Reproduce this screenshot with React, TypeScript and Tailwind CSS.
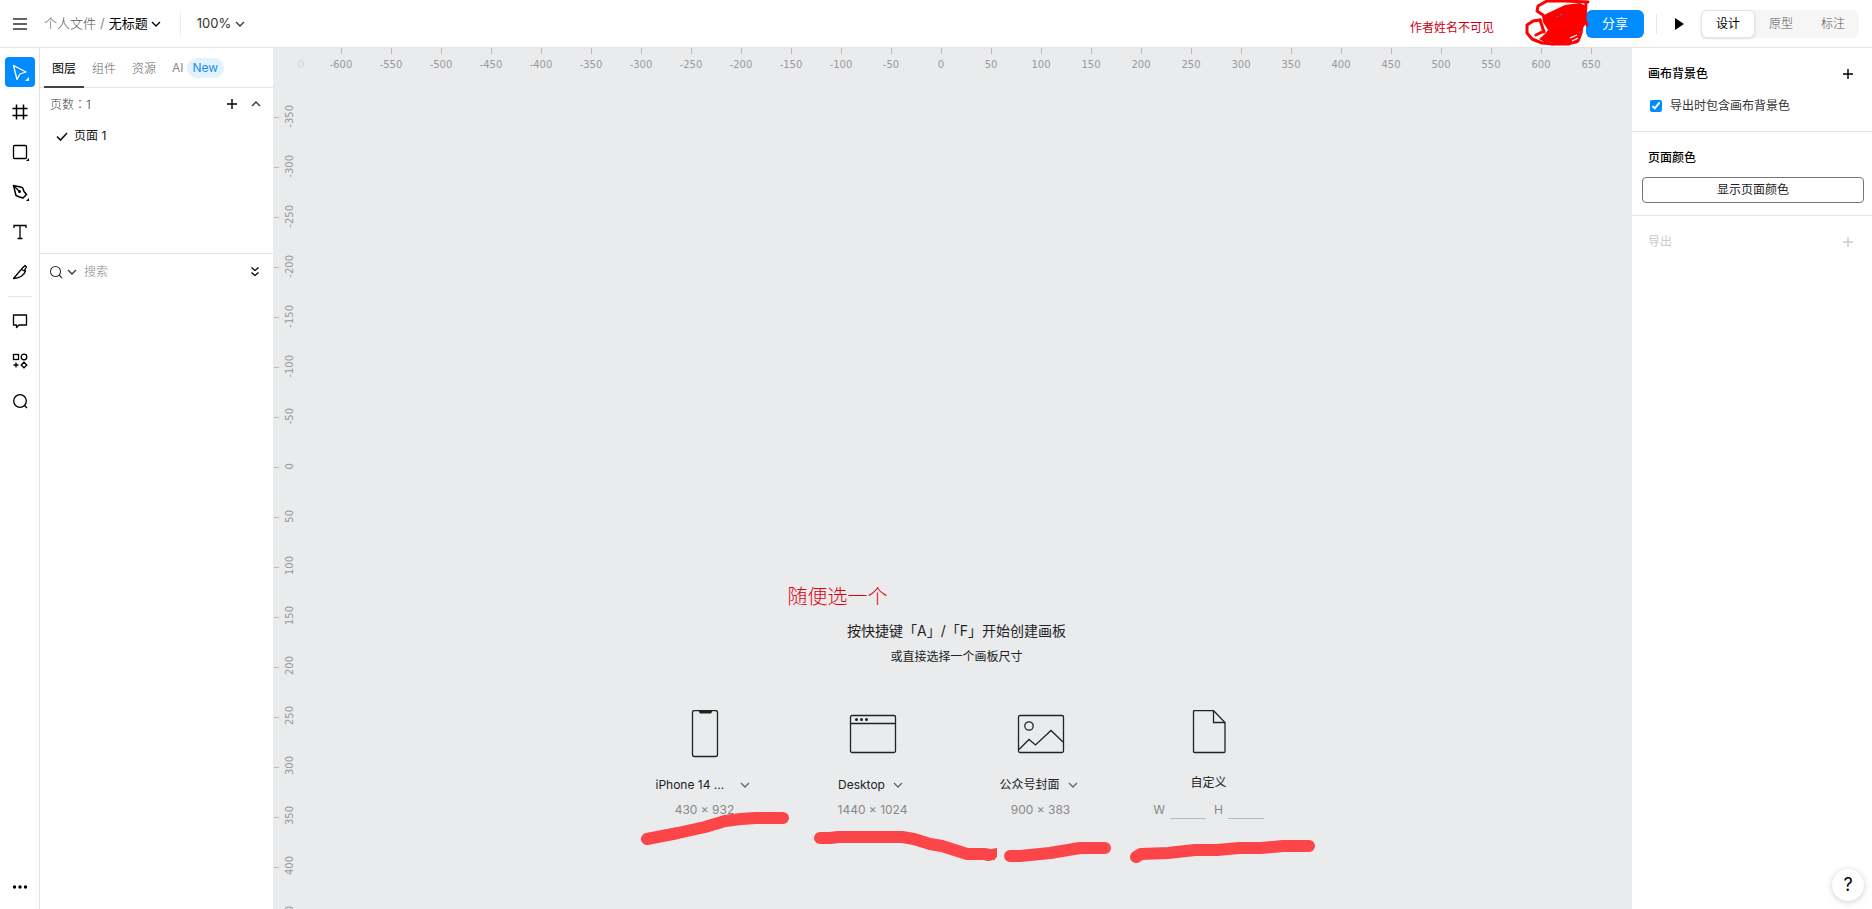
import type { ReactNode } from 'react';
import { useState } from 'react';
import clsx from 'clsx';

const rulerX = Array.from({ length: 26 }, (_, i) => -600 + i * 50);
const rulerY = Array.from({ length: 17 }, (_, i) => -350 + i * 50);

function Icon({ size = 20, className, children }: { size?: number; className?: string; children: ReactNode }) {
  return (
    <svg
      width={size}
      height={size}
      viewBox={`0 0 ${size} ${size}`}
      fill="none"
      stroke="currentColor"
      strokeWidth="1.3"
      className={clsx('shrink-0', className)}
      aria-hidden="true"
    >
      {children}
    </svg>
  );
}

function Chevron({ className, up }: { className?: string; up?: boolean }) {
  return (
    <Icon size={10} className={className}>
      <path d={up ? 'M1 7l4-4 4 4' : 'M1 3l4 4 4-4'} />
    </Icon>
  );
}

function Plus({ className }: { className?: string }) {
  return (
    <Icon size={10} className={className}>
      <path d="M5 0v10M0 5h10" strokeWidth="1.4" />
    </Icon>
  );
}

const tools = [
  {
    label: '选择',
    icon: (
      <>
        <path d="M3.5 3.5l12.5 6.5-6 2-3 5.5z" strokeLinejoin="round" />
        <path d="M19 15v4h-4z" fill="currentColor" stroke="none" />
      </>
    ),
  },
  { label: '画板', icon: <path d="M6.5 2.5v15M13.5 2.5v15M2.5 6.5h15M2.5 13.5h15" strokeWidth="1.5" /> },
  {
    label: '矩形',
    icon: (
      <>
        <rect x="3.5" y="3.5" width="13" height="13" rx="1" />
        <path d="M19 16v3h-3z" fill="currentColor" stroke="none" />
      </>
    ),
  },
  {
    label: '钢笔',
    icon: (
      <>
        <path d="M3.5 3.5l9 2 1.5 4 2.500 3-3.500 3.500-3.500-1-3.500-1.500z" strokeLinejoin="round" strokeWidth="1.5" />
        <path d="M3.5 3.5l5.500 5.500" />
        <circle cx="9.5" cy="9.5" r="1.5" fill="currentColor" stroke="none" />
        <path d="M19 16v3h-3z" fill="currentColor" stroke="none" />
      </>
    ),
  },
  { label: '文本', icon: <path d="M4 6V3.5h12V6M10 3.5v13M7.5 16.5h5" /> },
  {
    label: '切图',
    icon: (
      <path
        d="M3.5 16.5l9-10.5 2.5-2.5 1.5 1.5-2 3 1 1c-1 4-6 7.5-12 7.5zM11.5 7.5l3 1.5"
        strokeLinejoin="round"
      />
    ),
  },
];

const extras = [
  { label: '评论', icon: <path d="M3.5 4h13v10H9l-2.5 2.5V14h-3z" strokeLinejoin="round" /> },
  {
    label: '插件',
    icon: (
      <>
        <rect x="3.5" y="3.5" width="5" height="5" />
        <circle cx="14" cy="6" r="2.8" />
        <path d="M6 11.5v5M3.5 14h5M14 11.2l2.8 2.8-2.8 2.8-2.8-2.8z" />
      </>
    ),
  },
  {
    label: '查找',
    icon: (
      <>
        <circle cx="10" cy="10" r="6.3" />
        <path d="M14.5 14.5l2.5 2.5" />
      </>
    ),
  },
];

const presets = [
  {
    name: 'iPhone 14 ...',
    size: '430 × 932',
    icon: (
      <>
        <rect x="11.5" y="0.5" width="25" height="46" rx="2" />
        <path d="M18 1h13v1l-1 1.500H19l-1-1.500z" fill="currentColor" stroke="none" />
      </>
    ),
  },
  {
    name: 'Desktop',
    size: '1440 × 1024',
    icon: (
      <>
        <rect x="1.5" y="5.5" width="45" height="37" rx="1.5" />
        <path d="M1.5 13.5h45" />
        <circle cx="7.5" cy="9.5" r="1.5" fill="currentColor" stroke="none" />
        <circle cx="12.5" cy="9.5" r="1.5" fill="currentColor" stroke="none" />
        <circle cx="17.5" cy="9.5" r="1.5" fill="currentColor" stroke="none" />
      </>
    ),
  },
  {
    name: '公众号封面',
    size: '900 × 383',
    icon: (
      <>
        <rect x="1.5" y="5.5" width="45" height="37" rx="1.5" />
        <circle cx="12" cy="16" r="4.2" />
        <path d="M2 39.5l10-10 6.5 5.5L34 20.5 46 32" />
      </>
    ),
  },
];

function ToolButton({ label, active, children }: { label: string; active?: boolean; children: ReactNode }) {
  return (
    <button
      type="button"
      aria-label={label}
      className={clsx(
        'flex size-[30px] items-center justify-center rounded',
        active ? 'bg-[#008cff] text-white' : 'text-black',
      )}
    >
      <Icon>{children}</Icon>
    </button>
  );
}

// Red scrawl over the author name
function Scribble() {
  return (
    <svg width="64" height="48" viewBox="0 0 64 48" className="relative ml-7 overflow-visible" aria-hidden="true">
      <path d="M20 16l6-3 17-8 15-2 6 3-1 19-5 6-2 8-8 3-10 1-16-1-5-3 6-5 3-4-5-8z" fill="#fe0000" />
      <g fill="none" stroke="#fe0000" strokeWidth="3" strokeLinejoin="round" strokeLinecap="round">
        <path d="M66 2L43 1 25 1 16 6 15 11 21 15" />
        <path d="M64 3l-1 17 2 5" />
        <path d="M18 20L11 21 5 25 5 33 10 39 20 43 32 44 46 44 56 41 59 33 60 26" />
        <path d="M14 35l8-4M18 20l4 12M30 44l14-3 10 1" />
      </g>
      <path d="M26 9l12-5M48 38l7-3M50 41l6-3" stroke="#fff" strokeWidth="1.2" />
      <path d="M34 17l3-1M38 15l3-1" stroke="#7a4fc0" strokeWidth="1" />
    </svg>
  );
}

function Header() {
  return (
    <header className="flex h-12 shrink-0 items-center border-b border-[#e3e3e5] bg-white text-xs">
      <button type="button" aria-label="菜单" className="ml-[13px] flex h-6 w-[14px] items-center text-[#333]">
        <svg width="14" height="12" fill="none" stroke="currentColor" strokeWidth="1.5" aria-hidden="true">
          <path d="M0 1h14M0 6h14M0 11h14" />
        </svg>
      </button>
      <nav className="ml-[17px] flex items-center gap-1 pt-px text-[13px]">
        <a href="#files" className="font-light text-[#555]">
          个人文件
        </a>
        <span className="text-[#888]">/</span>
        <button type="button" className="flex items-center gap-[3px] text-black">
          无标题
          <Chevron />
        </button>
      </nav>
      <div className="ml-[19px] h-6 w-px bg-[#ececec]" />
      <button type="button" className="ml-4 flex items-center gap-1 pt-px text-[13px] text-[#333]">
        100%
        <Chevron />
      </button>

      <span className="ml-auto pt-2 text-[#cc0011]">作者姓名不可见</span>
      <Scribble />
      <button type="button" className="h-7 w-[58px] rounded-md bg-[#008cff] text-[13px] text-white">
        分享
      </button>
      <div className="ml-3 h-5 w-px bg-[#e6e6e6]" />
      <button type="button" aria-label="播放" className="ml-[18px]">
        <svg width="10" height="12" fill="#000" aria-hidden="true">
          <path d="M0 0l9 6-9 6z" />
        </svg>
      </button>
      <div className="ml-4 mr-[13px] flex h-7 rounded-md bg-[#f6f6f6] text-[#555]">
        <button type="button" className="w-[54px] rounded-md border border-[#e4e4e4] bg-white text-black shadow-sm">
          设计
        </button>
        <button type="button" className="w-[52px] font-light">
          原型
        </button>
        <button type="button" className="w-[52px] font-light">
          标注
        </button>
      </div>
    </header>
  );
}

function Toolbar() {
  return (
    <aside className="flex w-10 shrink-0 flex-col items-center gap-[10px] border-r border-[#e3e3e5] pb-[7px] pt-[9px]">
      {tools.map((t, i) => (
        <ToolButton key={t.label} label={t.label} active={i === 0}>
          {t.icon}
        </ToolButton>
      ))}
      <div className="-my-px h-px w-6 bg-[#e3e3e5]" />
      {extras.map((t) => (
        <ToolButton key={t.label} label={t.label}>
          {t.icon}
        </ToolButton>
      ))}
      <div className="mt-auto">
        <ToolButton label="更多">
          <g fill="currentColor" stroke="none">
            <circle cx="4.5" cy="10" r="1.7" />
            <circle cx="10" cy="10" r="1.7" />
            <circle cx="15.5" cy="10" r="1.7" />
          </g>
        </ToolButton>
      </div>
    </aside>
  );
}

function LayersPanel() {
  return (
    <aside className="w-[233px] shrink-0 text-xs">
      <div className="flex h-10 items-stretch border-b border-[#e3e3e5] pl-1 font-light text-[#666]">
        <button type="button" className="-mb-px w-10 border-b-2 border-[#444] pt-[3px] font-normal text-black">
          图层
        </button>
        <button type="button" className="w-10 pt-[2px]">
          组件
        </button>
        <button type="button" className="w-10 pt-[2px]">
          资源
        </button>
        <button type="button" className="flex items-center gap-[3px] pl-2 pt-px font-normal text-[#888]">
          AI
          <span className="rounded-full bg-[#e3f2ff] px-[6px] py-[2px] text-[#1a8cef]">New</span>
        </button>
      </div>
      <div className="flex h-8 items-center pl-[10px] pr-2">
        <span className="font-light text-[#444]">
          页数<span className="font-['Noto_Sans_CJK_TC',sans-serif]">：</span>1
        </span>
        <button type="button" aria-label="添加页面" className="ml-auto p-1">
          <Plus />
        </button>
        <button type="button" aria-label="收起" className="ml-[6px] p-1 text-[#333]">
          <Chevron up />
        </button>
      </div>
      <button type="button" className="flex h-8 w-full items-center gap-[6px] pl-4 text-left text-[#111]">
        <Icon size={12}>
          <path d="M1 6.5l3.5 3.5 6.5-7" strokeWidth="1.6" />
        </Icon>
        页面 1
      </button>
      <div className="mt-[101px] flex h-9 items-center border-t border-[#e3e3e5] pl-[9px] pr-[9px]">
        <Icon size={14} className="text-[#333]">
          <circle cx="6.5" cy="6.5" r="5" strokeWidth="1.1" />
          <path d="M10 10l3 3" strokeWidth="1.1" />
        </Icon>
        <Chevron className="ml-1 text-[#333]" />
        <input
          aria-label="搜索"
          placeholder="搜索"
          className="ml-[7px] w-0 flex-1 font-light outline-none placeholder:text-[#888]"
        />
        <button type="button" aria-label="全部收起" className="p-[3px]">
          <Icon size={12}>
            <path d="M2.5 1.5L6 4.5l3.5-3M2.5 6.5L6 9.5l3.5-3" />
          </Icon>
        </button>
      </div>
    </aside>
  );
}

function PresetPicker() {
  return (
    <div className="relative flex w-[672px] flex-col items-center text-[#222]">
      <p className="text-sm leading-5">按快捷键「A」/「F」开始创建画板</p>
      <p className="mt-[6px] text-xs leading-5">或直接选择一个画板尺寸</p>
      <div className="mt-[43px] grid w-full grid-cols-4 text-xs leading-5">
        {presets.map((p, i) => (
          <div key={p.name} className="flex flex-col items-center">
            <Icon size={48}>{p.icon}</Icon>
            <button type="button" className="mr-1 mt-[17px] flex items-center gap-2 text-left">
              <span className={clsx(i === 0 && 'w-[76px]')}>{p.name}</span>
              <Chevron className="text-[#666]" />
            </button>
            <span className="mt-[5px] text-[#888]">{p.size}</span>
          </div>
        ))}
        <div className="flex flex-col items-center">
          <Icon size={48}>
            <path d="M9.5 .5h19l11.5 12v29a1 1 0 01-1 1H9.500a1 1 0 01-1-1v-40a1 1 0 011-1zM28.5 .5v12h11.5" />
          </Icon>
          <span className="mt-[15px]">自定义</span>
          <div className="mt-[7px] flex h-5 items-center gap-2 text-[#888]">
            <label className="flex items-center gap-[5px]">
              W
              <input className="h-[18px] w-9 border-b border-[#bbb] outline-none" />
            </label>
            <label className="flex items-center gap-[5px]">
              H
              <input className="h-[18px] w-9 border-b border-[#bbb] outline-none" />
            </label>
          </div>
        </div>
      </div>

      {/* Markup over the presets */}
      <p className="absolute -top-9 left-[167px] text-xl leading-6 font-light text-[#e00010]">随便选一个</p>
      <svg
        width="672"
        height="260"
        className="pointer-events-none absolute left-0 top-0 overflow-visible"
        fill="none"
        stroke="#fc4548"
        strokeWidth="12"
        strokeLinecap="round"
        strokeLinejoin="round"
        aria-hidden="true"
      >
        <path d="M26 218l31-6 27-6 20-6 16-2 15-1h27" />
        <path d="M199 217h10l8-1h64l12 2 16 5 12 2 25 8h17l5 1" />
        <path d="M370 228l6-1v9l-4 4z" fill="#fc4548" stroke="none" />
        <path d="M389 235h10l30-3 30-5h25" />
        <path d="M534 235l5-3 27-1 27-3h22l22-2h22l22-2h26" transform="translate(-19 1)" />
      </svg>
    </div>
  );
}

function Canvas() {
  return (
    <main className="flex min-w-0 flex-1 flex-col overflow-hidden bg-[#eaebed] font-['DejaVu_Sans',sans-serif] text-[10px] leading-3 text-[#999]">
      <div className="flex h-11 shrink-0">
        <div className="flex w-[43px] shrink-0 justify-end pr-3 pt-[11px] text-[#d2d3d5]">0</div>
        {rulerX.map((n) => (
          <div key={n} className="flex w-[50px] shrink-0 flex-col items-center">
            <span className="h-[6px] w-px bg-[#bbb]" />
            <span className="mt-[5px]">{n}</span>
          </div>
        ))}
      </div>
      <div className="flex min-h-0 flex-1">
        <div className="w-6 shrink-0 overflow-hidden">
          {rulerY.map((n) => (
            <div key={n} className="flex h-[50px] items-center gap-[5px] pl-px">
              <span className="h-px w-[5px] bg-[#bbb]" />
              <span className="rotate-180 pt-[2px] [writing-mode:vertical-rl]">{n}</span>
            </div>
          ))}
        </div>
        <div className="flex flex-1 flex-col items-center justify-end pb-[89px] pr-4 font-['Inter','Noto_Sans_CJK_SC',sans-serif]">
          <PresetPicker />
        </div>
      </div>
    </main>
  );
}

function DesignPanel() {
  const [withBg, setWithBg] = useState(true);

  return (
    <aside className="flex w-60 shrink-0 flex-col text-xs leading-5 text-black">
      <section className="border-b border-[#e3e3e5] pb-[15px] pl-4 pr-[19px] pt-4">
        <div className="flex items-center justify-between">
          <h2 className="font-medium">画布背景色</h2>
          <button type="button" aria-label="添加背景色">
            <Plus />
          </button>
        </div>
        <label className="mt-3 flex items-center gap-2 pl-[2px] text-[#333]">
          <input
            type="checkbox"
            checked={withBg}
            onChange={(e) => setWithBg(e.target.checked)}
            className="size-3 accent-[#008cff]"
          />
          导出时包含画布背景色
        </label>
      </section>
      <section className="border-b border-[#e3e3e5] px-2 pb-3 pt-4">
        <h2 className="pl-2 font-medium">页面颜色</h2>
        <button type="button" className="mt-[9px] ml-[2px] h-[26px] w-[222px] rounded border border-[#777] text-[#222]">
          显示页面颜色
        </button>
      </section>
      <section className="flex items-center justify-between pl-4 pr-[19px] pt-4 text-[#ccc]">
        <h2>导出</h2>
        <button type="button" aria-label="添加导出">
          <Plus />
        </button>
      </section>
      <button
        type="button"
        aria-label="帮助"
        className="mb-2 mr-2 mt-auto size-8 self-end rounded-full bg-white text-lg shadow-[0_1px_6px_rgba(0,0,0,0.2)]"
      >
        ?
      </button>
    </aside>
  );
}

export default function App() {
  return (
    <div className="flex h-screen flex-col bg-white font-['Inter','Noto_Sans_CJK_SC',sans-serif]">
      <Header />
      <div className="flex min-h-0 flex-1">
        <Toolbar />
        <LayersPanel />
        <Canvas />
        <DesignPanel />
      </div>
    </div>
  );
}
